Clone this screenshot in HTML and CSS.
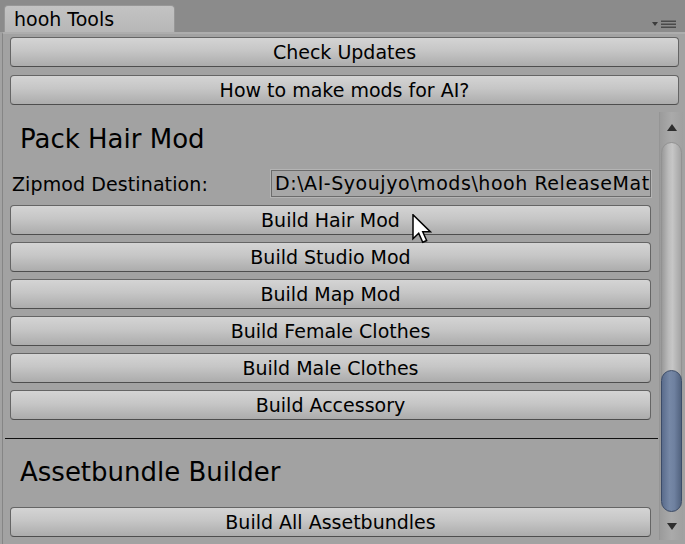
FILE: index.html
```html
<!DOCTYPE html>
<html>
<head>
<meta charset="utf-8">
<link rel="stylesheet" href="styles.css">
</head>
<body>
<div class="window">
  <div class="tabbar">
    <div class="tab">hooh Tools</div>
    <div class="tab-menu">
      <svg width="24" height="8" viewBox="0 0 24 8">
        <polygon points="0,2 6,2 3,6" fill="#3c3c3c"/>
        <rect x="9" y="0.5" width="15" height="1.5" fill="#4a4a4a"/>
        <rect x="9" y="3.5" width="15" height="1.5" fill="#4a4a4a"/>
        <rect x="9" y="6.5" width="15" height="1.5" fill="#4a4a4a"/>
      </svg>
    </div>
  </div>
  <div class="content">
    <div class="top-buttons">
      <button class="btn">Check Updates</button>
      <button class="btn">How to make mods for AI?</button>
    </div>
    <div class="scroll">
      <div class="scroll-content">
        <h2 class="heading">Pack Hair Mod</h2>
        <div class="field-row">
          <span class="label">Zipmod Destination:</span>
          <div class="textfield">D:\AI-Syoujyo\mods\hooh ReleaseMat</div>
        </div>
        <div class="btn-list">
          <button class="btn">Build Hair Mod</button>
          <button class="btn">Build Studio Mod</button>
          <button class="btn">Build Map Mod</button>
          <button class="btn">Build Female Clothes</button>
          <button class="btn">Build Male Clothes</button>
          <button class="btn">Build Accessory</button>
        </div>
        <hr class="sep">
        <h2 class="heading heading-second">Assetbundle Builder</h2>
        <div class="btn-single">
          <button class="btn">Build All Assetbundles</button>
        </div>
      </div>
      <div class="scrollbar">
        <div class="sb-up"><span class="arrow-up"></span></div>
        <div class="sb-track">
          <div class="sb-thumb" style="top:227px"></div>
        </div>
        <div class="sb-down"><span class="arrow-down"></span></div>
      </div>
    </div>
  </div>
  <svg class="cursor" width="20" height="30" viewBox="0 0 13 20">
    <path d="M0.5,0.5 L0.5,16.5 L4.3,12.8 L7,18.8 L9.6,17.7 L7,11.8 L12,11.8 Z" fill="#ffffff" stroke="#000000" stroke-width="1" stroke-linejoin="miter"/>
  </svg>
</div>
</body>
</html>
```

FILE: styles.css
```css
* { box-sizing: border-box; }
html, body { margin: 0; padding: 0; }
body {
  font-family: "DejaVu Sans", "Liberation Sans", sans-serif;
  background: #a2a2a2;
  color: #000;
}
.window {
  position: relative;
  width: 685px;
  height: 544px;
  background: #a2a2a2;
  display: flex;
  flex-direction: column;
  overflow: hidden;
}
.tabbar {
  height: 32px;
  flex: none;
  background: #8b8b8b;
  display: flex;
  align-items: flex-end;
  padding-left: 4px;
}
.tab {
  width: 171px;
  height: 27px;
  background: linear-gradient(#c3c3c3, #b7b7b7);
  border: 1px solid #979797;
  border-bottom: none;
  border-radius: 4px 4px 0 0;
  padding: 2px 0 0 9px;
  font-size: 19px;
  line-height: 22px;
}
.tab-menu {
  margin-left: auto;
  margin-right: 9px;
  margin-bottom: 4px;
  display: flex;
}
.content {
  flex: 1;
  display: flex;
  flex-direction: column;
  margin-left: 2px;
  border-left: 1px solid #858585;
  border-top: 2px solid #adadad;
  padding-bottom: 4px;
  min-height: 0;
}
.top-buttons {
  display: flex;
  flex-direction: column;
  gap: 8px;
  padding: 3px 6px 0 7px;
}
.btn {
  display: block;
  width: 100%;
  height: 30px;
  margin: 0;
  padding: 0;
  font-family: "DejaVu Sans", "Liberation Sans", sans-serif;
  font-size: 19px;
  line-height: 29px;
  color: #000;
  text-align: center;
  background: linear-gradient(#d4d4d4 0%, #c6c6c6 45%, #acacac 100%);
  border: 1px solid #656565;
  border-bottom-color: #4e4e4e;
  border-radius: 4px;
}
.scroll {
  flex: 1;
  display: flex;
  margin-top: 7px;
  margin-right: 2px;
  min-height: 0;
}
.scroll-content {
  flex: 1;
  padding-top: 12px;
  overflow: hidden;
}
.heading {
  margin: 0;
  padding-left: 17px;
  font-size: 26px;
  line-height: 30px;
  font-weight: normal;
}
.heading-second { margin-top: 18px; }
.field-row {
  margin-top: 16px;
  height: 27px;
  display: flex;
  align-items: center;
  padding: 0 8px 0 9px;
}
.label {
  flex: none;
  width: 259px;
  font-size: 19px;
  letter-spacing: 0.1px;
}
.textfield {
  flex: 1;
  min-width: 0;
  height: 27px;
  background: #a7a7a7;
  border: 1px solid #6c6c6c;
  box-shadow: 0 0 0 1px #b4b4b4;
  padding-left: 3px;
  font-size: 19px;
  line-height: 25px;
  letter-spacing: 0.55px;
  white-space: nowrap;
  overflow: hidden;
}
.btn-list {
  margin-top: 8px;
  display: flex;
  flex-direction: column;
  gap: 7px;
  padding: 0 8px 0 7px;
}
.sep {
  margin: 18px 1px 0 2px;
  height: 1px;
  border: 0;
  background: #111;
}
.btn-single {
  margin-top: 20px;
  padding: 0 8px 0 7px;
}
.scrollbar {
  width: 24px;
  flex: none;
  display: flex;
  flex-direction: column;
  background: linear-gradient(90deg, #9b9b9b, #aaaaaa 50%, #a0a0a0);
  border-left: 1px solid #959595;
}
.sb-up, .sb-down {
  flex: none;
  display: flex;
  justify-content: center;
  align-items: center;
}
.sb-up { height: 30px; }
.sb-down { height: 28px; }
.arrow-up {
  width: 0; height: 0;
  border-left: 5px solid transparent;
  border-right: 5px solid transparent;
  border-bottom: 7px solid #2e2e2e;
}
.arrow-down {
  width: 0; height: 0;
  border-left: 5px solid transparent;
  border-right: 5px solid transparent;
  border-top: 7px solid #2e2e2e;
}
.sb-track {
  flex: 1;
  position: relative;
  margin: 0 1px 0 1px;
  border-radius: 11px;
  border: 1px solid #929292;
  background: linear-gradient(90deg, #9a9a9a 0%, #bcbcbc 35%, #c6c6c6 55%, #a4a4a4 100%);
}
.sb-thumb {
  position: absolute;
  left: -1px;
  right: -1px;
  bottom: -1px;
  border-radius: 11px;
  border: 1px solid #3c4c68;
  background: linear-gradient(90deg, #5a6c8c 0%, #7688a6 40%, #6f81a0 65%, #52637f 100%);
}
.cursor {
  position: absolute;
  left: 412px;
  top: 214px;
}
```
